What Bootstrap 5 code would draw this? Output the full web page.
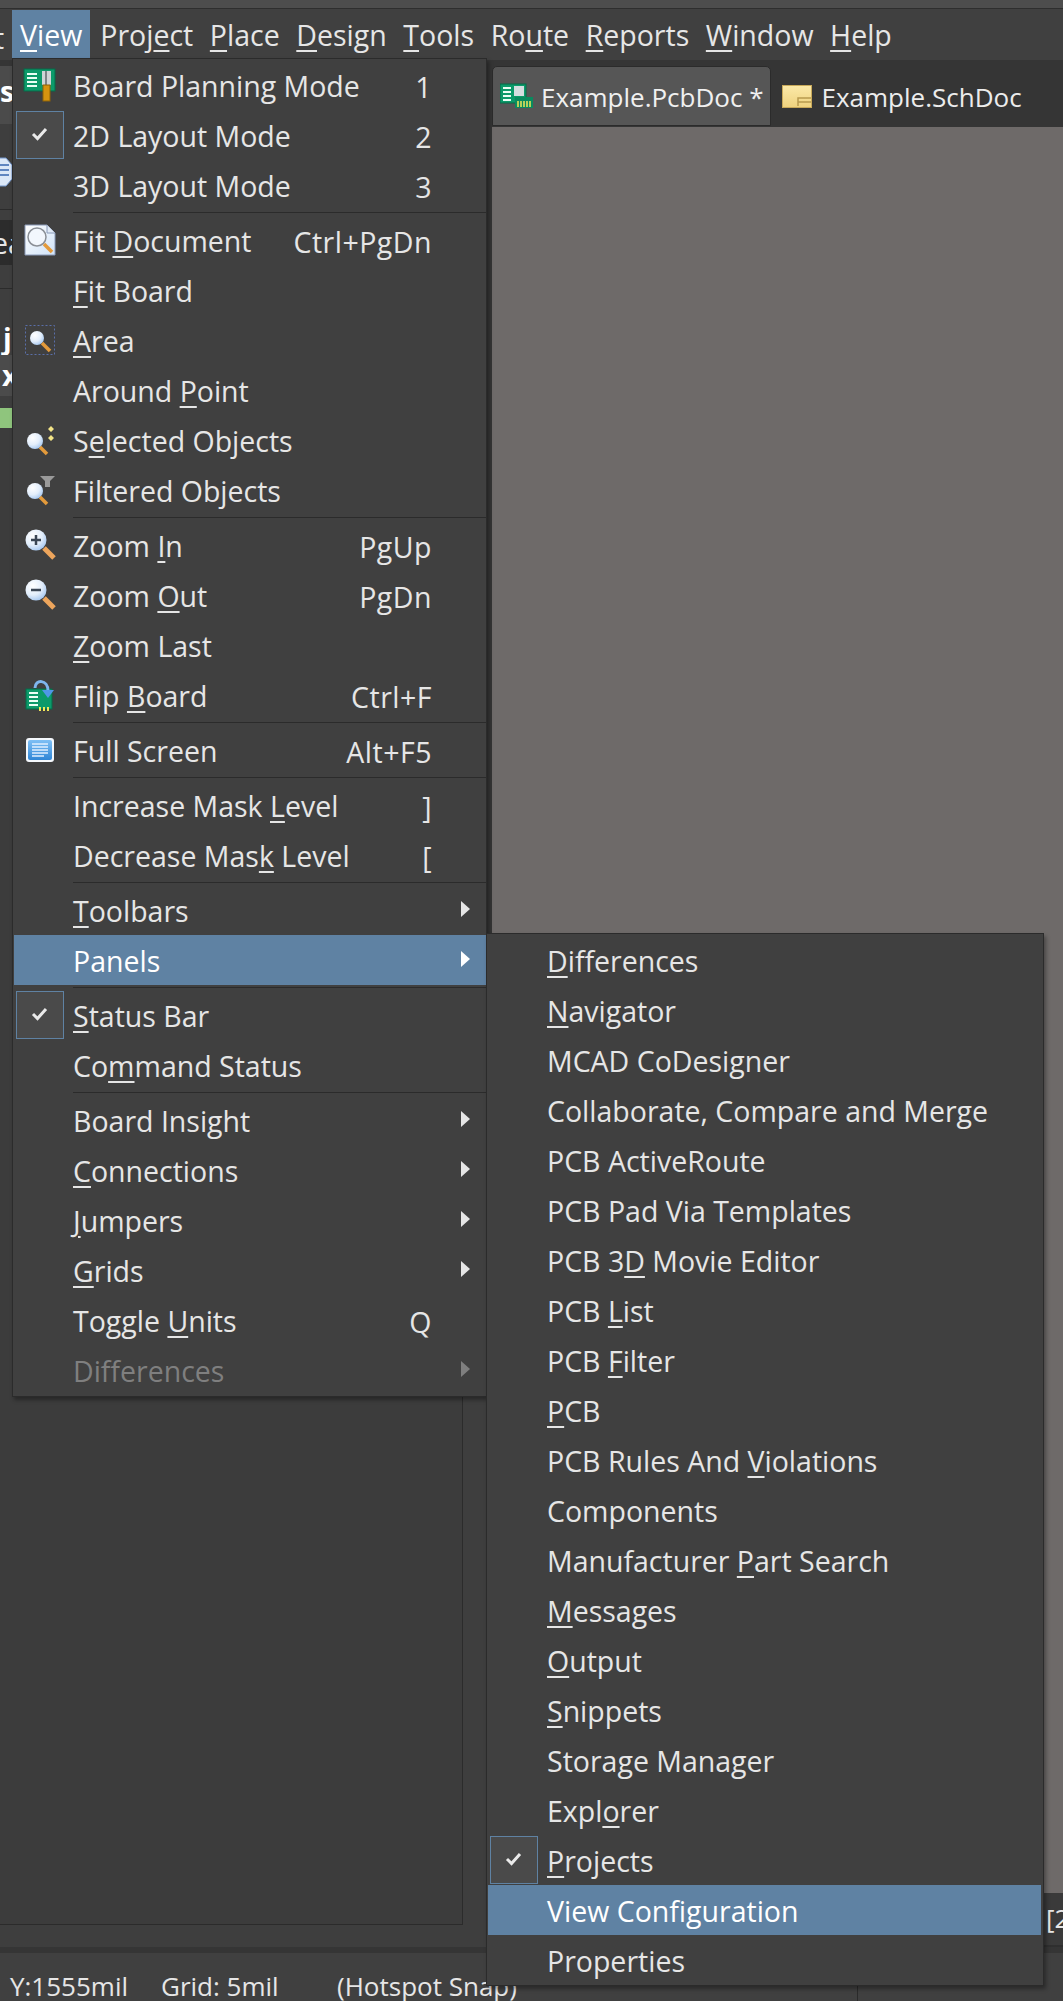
<!DOCTYPE html>
<html lang="en">
  <head>
    <meta charset="UTF-8" />
    <title>View menu</title>
    <link href="https://cdn.jsdelivr.net/npm/bootstrap@5.3.0/dist/css/bootstrap.min.css" rel="stylesheet" />
    <style>
      html, body { height: 2001px; overflow: hidden; }
      body { background: #404040; color: #e6e6e6; font-family: "Open Sans", "Noto Sans", sans-serif; font-size: 28.5px; line-height: 1; }
      u { text-decoration-thickness: 1.5px; text-underline-offset: 4px; }
      .app { height: 2001px; position: relative; overflow: hidden; }
      .top-strip { height: 9px; background: #4d4d4d; border-bottom: 1px solid #2e2e2e; }
      .mbar { height: 51px; background: #404040; padding-left: 12px; }
      .mbar-cut { position: absolute; left: -6px; top: 15px; }
      .mbar-item { padding: 3px 8px 0; height: 48px; margin-top: 1px; margin-right: 0.6px; }
      .mbar-item.on { background: #5f82a3; color: #fff; margin-right: 2px; }
      .work { height: 1887px; }
      .side { width: 487px; background: #3e3e3e; border-right: 1px solid #2b2b2b; }
      .side-strip { width: 5px; background: #353535; }
      .side-top { height: 6px; background: #353535; }
      .right-col { min-width: 0; overflow: hidden; }
      .sliver { overflow: hidden; width: 14px; font-weight: 700; color: #fff; }
      .sl-line { height: 1px; width: 14px; background: #2b2b2b; }
      .sl1 { height: 58px; background: #4b4b4b; padding-top: 11px; margin-bottom: 31px; }
      .sl2 { height: 30px; margin-bottom: 24px; }
      .sl3 { height: 45px; background: #2c2c2c; margin-top: 10px; margin-bottom: 23px; font-weight: 400; color: #e6e6e6; text-indent: -8px; padding-top: 9px; white-space: nowrap; }
      .sl4 { height: 31px; margin-top: 35px; text-indent: 3px; }
      .sl5 { height: 41px; background: #4b4b4b; padding-top: 6px; margin-bottom: 12px; text-indent: 2px; }
      .sl6 { height: 20px; background: #8fc57d; }
      .side-inner { width: 463px; height: 1497px; background: #3c3c3c; border-right: 1px solid #2b2b2b; border-bottom: 1px solid #2b2b2b; }
      .tabstrip { height: 67px; background: #353535; padding-top: 6px; font-size: 26px; }
      .tabstrip span { padding-top: 2px; }
      .doc-tab { height: 60px; background: #565656; border: 1px solid #2b2b2b; border-radius: 5px 5px 0 0; padding: 0 6px 0 7px; gap: 8px; color: #f0f0f0; }
      .doc-tab2 { height: 60px; padding: 0 11px; gap: 10px; color: #ececec; }
      .canvas { height: 1766px; background: #6e6a69; }
      .lower-right { height: 54px; background: #3a3a3a; border-bottom: 2px solid #2f2f2f; padding: 12px 0 0 554px; font-size: 26px; white-space: nowrap; }
      .sbar-gap { height: 6px; background: #353535; }
      .sbar { height: 48px; background: #404040; padding-left: 10px; font-size: 26px; white-space: nowrap; }
      .sbar-y { width: 151px; padding-top: 20px; }
      .sbar-grid { width: 176px; padding-top: 20px; }
      .sbar-snap { width: 520px; padding-top: 20px; }
      .sbar-end { border-left: 1px solid #2b2b2b; }
      .pop { position: absolute; background: #404040; border: 1px solid #2b2b2b; box-shadow: 2px 3px 4px rgba(0, 0, 0, 0.35); z-index: 5; }
      .pop-main { left: 12px; top: 58px; width: 475px; padding: 1px 0 0 1px; height: 1339px; }
      .pop-sub { left: 486px; top: 933px; width: 558px; padding: 1px 2px 0 1px; height: 1053px; z-index: 6; }
      .mi { height: 50px; position: relative; padding-left: 59px; }
      .mi > span { padding-top: 2px; }
      .mi.hot { background: #5f82a3; color: #fff; }
      .mi.off { color: #7f7f7f; }
      .mi > .mi-key { position: absolute; right: 54px; top: 11px; letter-spacing: 0.5px; }
      .mi > .mi-arrow { position: absolute; left: 447px; top: 16px; width: 0; height: 0; padding: 0; border-left: 9px solid #e6e6e6; border-top: 8.5px solid transparent; border-bottom: 8.5px solid transparent; }
      .mi.hot .mi-arrow { border-left-color: #fff; }
      .mi.off .mi-arrow { border-left-color: #7f7f7f; }
      .mi-sep { height: 5px; padding-top: 2px; margin-left: 59px; }
      .mi-sep::before { content: ""; display: block; height: 1px; background: #2b2b2b; }
      .mi > .mi-check { position: absolute; left: 2px; top: 1px; width: 48px; height: 48px; background: #4a4a4a; border: 1px solid #5f82a3; padding: 0; }
      .mi-ico { position: absolute; left: 9px; top: 8px; }
      .mi-tick { left: 15px; top: 14px; }
    </style>
  </head>
  <body>
    <svg width="0" height="0" class="position-absolute">
      <defs>
        <radialGradient id="glass" cx="0.35" cy="0.3" r="0.8">
          <stop offset="0" stop-color="#ffffff" />
          <stop offset="0.55" stop-color="#e3eefb" />
          <stop offset="1" stop-color="#9cc1ee" />
        </radialGradient>
        <linearGradient id="page" x1="0" y1="0" x2="1" y2="1">
          <stop offset="0" stop-color="#ffffff" />
          <stop offset="1" stop-color="#cfe2f7" />
        </linearGradient>
        <linearGradient id="sch" x1="0" y1="0" x2="0" y2="1">
          <stop offset="0" stop-color="#fbe9a8" />
          <stop offset="1" stop-color="#efd27e" />
        </linearGradient>
        <linearGradient id="scr" x1="0" y1="0" x2="0" y2="1">
          <stop offset="0" stop-color="#7fc0f5" />
          <stop offset="1" stop-color="#2f86d6" />
        </linearGradient>
      </defs>
    </svg>

    <div class="app">
      <div class="top-strip"></div>
      <div class="mbar d-flex position-relative">
        <span class="mbar-cut">t</span>
        <div class="mbar-item on d-flex align-items-center"><span><u>V</u>iew</span></div>
        <div class="mbar-item d-flex align-items-center"><span>Proj<u>e</u>ct</span></div>
        <div class="mbar-item d-flex align-items-center"><span><u>P</u>lace</span></div>
        <div class="mbar-item d-flex align-items-center"><span><u>D</u>esign</span></div>
        <div class="mbar-item d-flex align-items-center"><span><u>T</u>ools</span></div>
        <div class="mbar-item d-flex align-items-center"><span>Ro<u>u</u>te</span></div>
        <div class="mbar-item d-flex align-items-center"><span><u>R</u>eports</span></div>
        <div class="mbar-item d-flex align-items-center"><span><u>W</u>indow</span></div>
        <div class="mbar-item d-flex align-items-center"><span><u>H</u>elp</span></div>
      </div>

      <div class="work d-flex">
        <div class="side flex-shrink-0">
          <div class="side-top"></div>
          <div class="sliver sl1">s</div>
          <div class="sl2">
            <svg width="12" height="30" viewBox="0 0 12 30"><path d="M-8 1h14l6 7v14l-6 7h-14z" fill="#dbe7f7" stroke="#6f93c9" /><path d="M0 8h9M0 13h9M0 18h9" stroke="#5f85c0" stroke-width="2" /></svg>
          </div>
          <div class="sl-line"></div>
          <div class="sliver sl3">ea</div>
          <div class="sl-line"></div>
          <div class="sliver sl4">j</div>
          <div class="sliver sl5">x</div>
          <div class="sl6 sliver"></div>
          <div class="side-inner"></div>
        </div>
        <div class="side-strip flex-shrink-0"></div>
        <div class="right-col flex-grow-1">
          <div class="tabstrip d-flex">
            <div class="doc-tab d-flex align-items-center">
              <svg width="33" height="26" viewBox="0 0 33 26">
                <rect x="0" y="1" width="26" height="19" fill="#0c9a6a" stroke="#056a48" />
                <path d="M3 5h8M3 9h8M3 13h8M3 17h8" stroke="#e9fff5" stroke-width="2" />
                <rect x="14" y="3" width="10" height="10" fill="#d5dde0" />
                <rect x="15" y="14" width="18" height="11" fill="#0a8a5e" />
                <path d="M18 18v6M21 18v6M24 18v6M27 18v6M30 18v6" stroke="#f1e85a" stroke-width="1.5" />
              </svg>
              <span>Example.PcbDoc *</span>
            </div>
            <div class="doc-tab2 d-flex align-items-center">
              <svg width="30" height="23" viewBox="0 0 30 23">
                <rect x="0.5" y="0.5" width="29" height="22" fill="url(#sch)" stroke="#c8a95a" />
                <path d="M16 21v-8h13M16 17h13" stroke="#b89a4e" fill="none" stroke-width="1.5" />
              </svg>
              <span>Example.SchDoc</span>
            </div>
          </div>
          <div class="canvas"></div>
          <div class="lower-right">[2</div>
        </div>
      </div>
      <div class="sbar-gap"></div>
      <div class="sbar d-flex">
        <span class="sbar-y">Y:1555mil</span>
        <span class="sbar-grid">Grid: 5mil</span>
        <span class="sbar-snap">(Hotspot Snap)</span>
        <span class="sbar-end"></span>
      </div>

      <div class="pop pop-main">
        <div class="mi d-flex align-items-center"><svg class="mi-ico" width="34" height="34" viewBox="0 0 34 34"><rect x="1" y="1" width="31" height="22" fill="#0c9a6a" stroke="#056a48" /><path d="M4 6h10M4 10h10M4 14h10M4 18h10" stroke="#e9fff5" stroke-width="2" /><rect x="19" y="3" width="9" height="14" fill="#cfd4d6" /><rect x="22" y="3" width="2" height="14" fill="#7c8386" /><rect x="20" y="17" width="7" height="16" fill="#d6930f" stroke="#8f6207" /></svg><span>Board Planning Mode</span><span class="mi-key">1</span></div>
        <div class="mi d-flex align-items-center"><span class="mi-check"></span><svg class="mi-ico mi-tick" width="22" height="20" viewBox="0 0 22 20"><path d="M4 10l4.500 4.500L17 5" fill="none" stroke="#eaeaea" stroke-width="3" /></svg><span>2D Layout Mode</span><span class="mi-key">2</span></div>
        <div class="mi d-flex align-items-center"><span>3D Layout Mode</span><span class="mi-key">3</span></div>
        <div class="mi-sep"></div>
        <div class="mi d-flex align-items-center"><svg class="mi-ico" width="34" height="34" viewBox="0 0 34 34"><path d="M2 2h22l8 8v22H2z" fill="url(#page)" stroke="#8a9ab8" /><path d="M24 2v8h8" fill="#dfe9f5" stroke="#8a9ab8" /><circle cx="14" cy="14" r="9" fill="#f2f7fd" stroke="#8a8f96" stroke-width="1.500" /><path d="M21 21l8 8" stroke="#e39a3b" stroke-width="3.500" /></svg><span>Fit <u>D</u>ocument</span><span class="mi-key">Ctrl+PgDn</span></div>
        <div class="mi d-flex align-items-center"><span><u>F</u>it Board</span></div>
        <div class="mi d-flex align-items-center"><svg class="mi-ico" width="34" height="34" viewBox="0 0 34 34"><rect x="2.500" y="2.500" width="29" height="29" fill="none" stroke="#5a6fa8" stroke-dasharray="2 2" /><circle cx="14" cy="15" r="7" fill="url(#glass)" /><path d="M19 20l8 8" stroke="#e39a3b" stroke-width="3.500" /></svg><span><u>A</u>rea</span></div>
        <div class="mi d-flex align-items-center"><span>Around <u>P</u>oint</span></div>
        <div class="mi d-flex align-items-center"><svg class="mi-ico" width="34" height="34" viewBox="0 0 34 34"><circle cx="12" cy="18" r="8" fill="url(#glass)" /><path d="M17 24l7 7" stroke="#e39a3b" stroke-width="3.500" /><path d="M28 3l3 3-3 3-3-3zM28 12l3 3-3 3-3-3z" fill="#f3e487" /></svg><span>S<u>e</u>lected Objects</span></div>
        <div class="mi d-flex align-items-center"><svg class="mi-ico" width="34" height="34" viewBox="0 0 34 34"><circle cx="12" cy="18" r="8" fill="url(#glass)" /><path d="M17 24l7 7" stroke="#e39a3b" stroke-width="3.500" /><path d="M17 3h15l-5 5v6h-5V8z" fill="#9a9a9a" /></svg><span>Filtered Objects</span></div>
        <div class="mi-sep"></div>
        <div class="mi d-flex align-items-center"><svg class="mi-ico" width="34" height="34" viewBox="0 0 34 34"><circle cx="13" cy="12" r="10.500" fill="url(#glass)" /><path d="M8 12h10M13 7v10" stroke="#3b4654" stroke-width="2.500" /><path d="M21 20l10 10" stroke="#eda55c" stroke-width="5" /></svg><span>Zoom <u>I</u>n</span><span class="mi-key">PgUp</span></div>
        <div class="mi d-flex align-items-center"><svg class="mi-ico" width="34" height="34" viewBox="0 0 34 34"><circle cx="13" cy="12" r="10.500" fill="url(#glass)" /><path d="M8 12h10" stroke="#3b4654" stroke-width="2.500" /><path d="M21 20l10 10" stroke="#eda55c" stroke-width="5" /></svg><span>Zoom <u>O</u>ut</span><span class="mi-key">PgDn</span></div>
        <div class="mi d-flex align-items-center"><span><u>Z</u>oom Last</span></div>
        <div class="mi d-flex align-items-center"><svg class="mi-ico" width="34" height="34" viewBox="0 0 34 34"><rect x="3" y="11" width="26" height="20" fill="#0c9a6a" stroke="#056a48" /><path d="M6 15h9M6 19h9M6 23h9M6 27h9" stroke="#e9fff5" stroke-width="2" /><path d="M17 29v4M21 29v4M25 29v4" stroke="#f1e85a" stroke-width="2" /><path d="M12 10c0-9 13-9 13 3" fill="none" stroke="#7fb6ee" stroke-width="3" /><path d="M19 12h12l-6 8z" fill="#4f97e6" /></svg><span>Flip <u>B</u>oard</span><span class="mi-key">Ctrl+F</span></div>
        <div class="mi-sep"></div>
        <div class="mi d-flex align-items-center"><svg class="mi-ico" width="34" height="34" viewBox="0 0 34 34"><rect x="3" y="5" width="28" height="24" rx="3" fill="#f4f8fc" /><rect x="5" y="7" width="24" height="20" rx="2" fill="url(#scr)" /><path d="M9 11h16M9 14h16M9 17h16M9 20h16M9 23h12" stroke="#dff0ff" stroke-width="1.500" /></svg><span>Full Screen</span><span class="mi-key">Alt+F5</span></div>
        <div class="mi-sep"></div>
        <div class="mi d-flex align-items-center"><span>Increase Mask <u>L</u>evel</span><span class="mi-key">]</span></div>
        <div class="mi d-flex align-items-center"><span>Decrease Mas<u>k</u> Level</span><span class="mi-key">[</span></div>
        <div class="mi-sep"></div>
        <div class="mi d-flex align-items-center"><span><u>T</u>oolbars</span><span class="mi-arrow"></span></div>
        <div class="mi hot d-flex align-items-center"><span>Panels</span><span class="mi-arrow"></span></div>
        <div class="mi-sep"></div>
        <div class="mi d-flex align-items-center"><span class="mi-check"></span><svg class="mi-ico mi-tick" width="22" height="20" viewBox="0 0 22 20"><path d="M4 10l4.500 4.500L17 5" fill="none" stroke="#eaeaea" stroke-width="3" /></svg><span><u>S</u>tatus Bar</span></div>
        <div class="mi d-flex align-items-center"><span>Co<u>m</u>mand Status</span></div>
        <div class="mi-sep"></div>
        <div class="mi d-flex align-items-center"><span>Board Insight</span><span class="mi-arrow"></span></div>
        <div class="mi d-flex align-items-center"><span><u>C</u>onnections</span><span class="mi-arrow"></span></div>
        <div class="mi d-flex align-items-center"><span><u>J</u>umpers</span><span class="mi-arrow"></span></div>
        <div class="mi d-flex align-items-center"><span><u>G</u>rids</span><span class="mi-arrow"></span></div>
        <div class="mi d-flex align-items-center"><span>Toggle <u>U</u>nits</span><span class="mi-key">Q</span></div>
        <div class="mi off d-flex align-items-center"><span>Differences</span><span class="mi-arrow"></span></div>
      </div>

      <div class="pop pop-sub">
        <div class="mi d-flex align-items-center"><span><u>D</u>ifferences</span></div>
        <div class="mi d-flex align-items-center"><span><u>N</u>avigator</span></div>
        <div class="mi d-flex align-items-center"><span>MCAD CoDesigner</span></div>
        <div class="mi d-flex align-items-center"><span>Collaborate, Compare and Merge</span></div>
        <div class="mi d-flex align-items-center"><span>PCB ActiveRoute</span></div>
        <div class="mi d-flex align-items-center"><span>PCB Pad Via Templates</span></div>
        <div class="mi d-flex align-items-center"><span>PCB 3<u>D</u> Movie Editor</span></div>
        <div class="mi d-flex align-items-center"><span>PCB <u>L</u>ist</span></div>
        <div class="mi d-flex align-items-center"><span>PCB <u>F</u>ilter</span></div>
        <div class="mi d-flex align-items-center"><span><u>P</u>CB</span></div>
        <div class="mi d-flex align-items-center"><span>PCB Rules And <u>V</u>iolations</span></div>
        <div class="mi d-flex align-items-center"><span>Components</span></div>
        <div class="mi d-flex align-items-center"><span>Manufacturer <u>P</u>art Search</span></div>
        <div class="mi d-flex align-items-center"><span><u>M</u>essages</span></div>
        <div class="mi d-flex align-items-center"><span><u>O</u>utput</span></div>
        <div class="mi d-flex align-items-center"><span><u>S</u>nippets</span></div>
        <div class="mi d-flex align-items-center"><span>Storage Manager</span></div>
        <div class="mi d-flex align-items-center"><span>Expl<u>o</u>rer</span></div>
        <div class="mi d-flex align-items-center"><span class="mi-check"></span><svg class="mi-ico mi-tick" width="22" height="20" viewBox="0 0 22 20"><path d="M4 10l4.500 4.500L17 5" fill="none" stroke="#eaeaea" stroke-width="3" /></svg><span><u>P</u>rojects</span></div>
        <div class="mi hot d-flex align-items-center"><span>View Configuration</span></div>
        <div class="mi d-flex align-items-center"><span>Properties</span></div>
      </div>
    </div>
    <script src="https://cdn.jsdelivr.net/npm/bootstrap@5.3.0/dist/js/bootstrap.bundle.min.js"></script>
  </body>
</html>
